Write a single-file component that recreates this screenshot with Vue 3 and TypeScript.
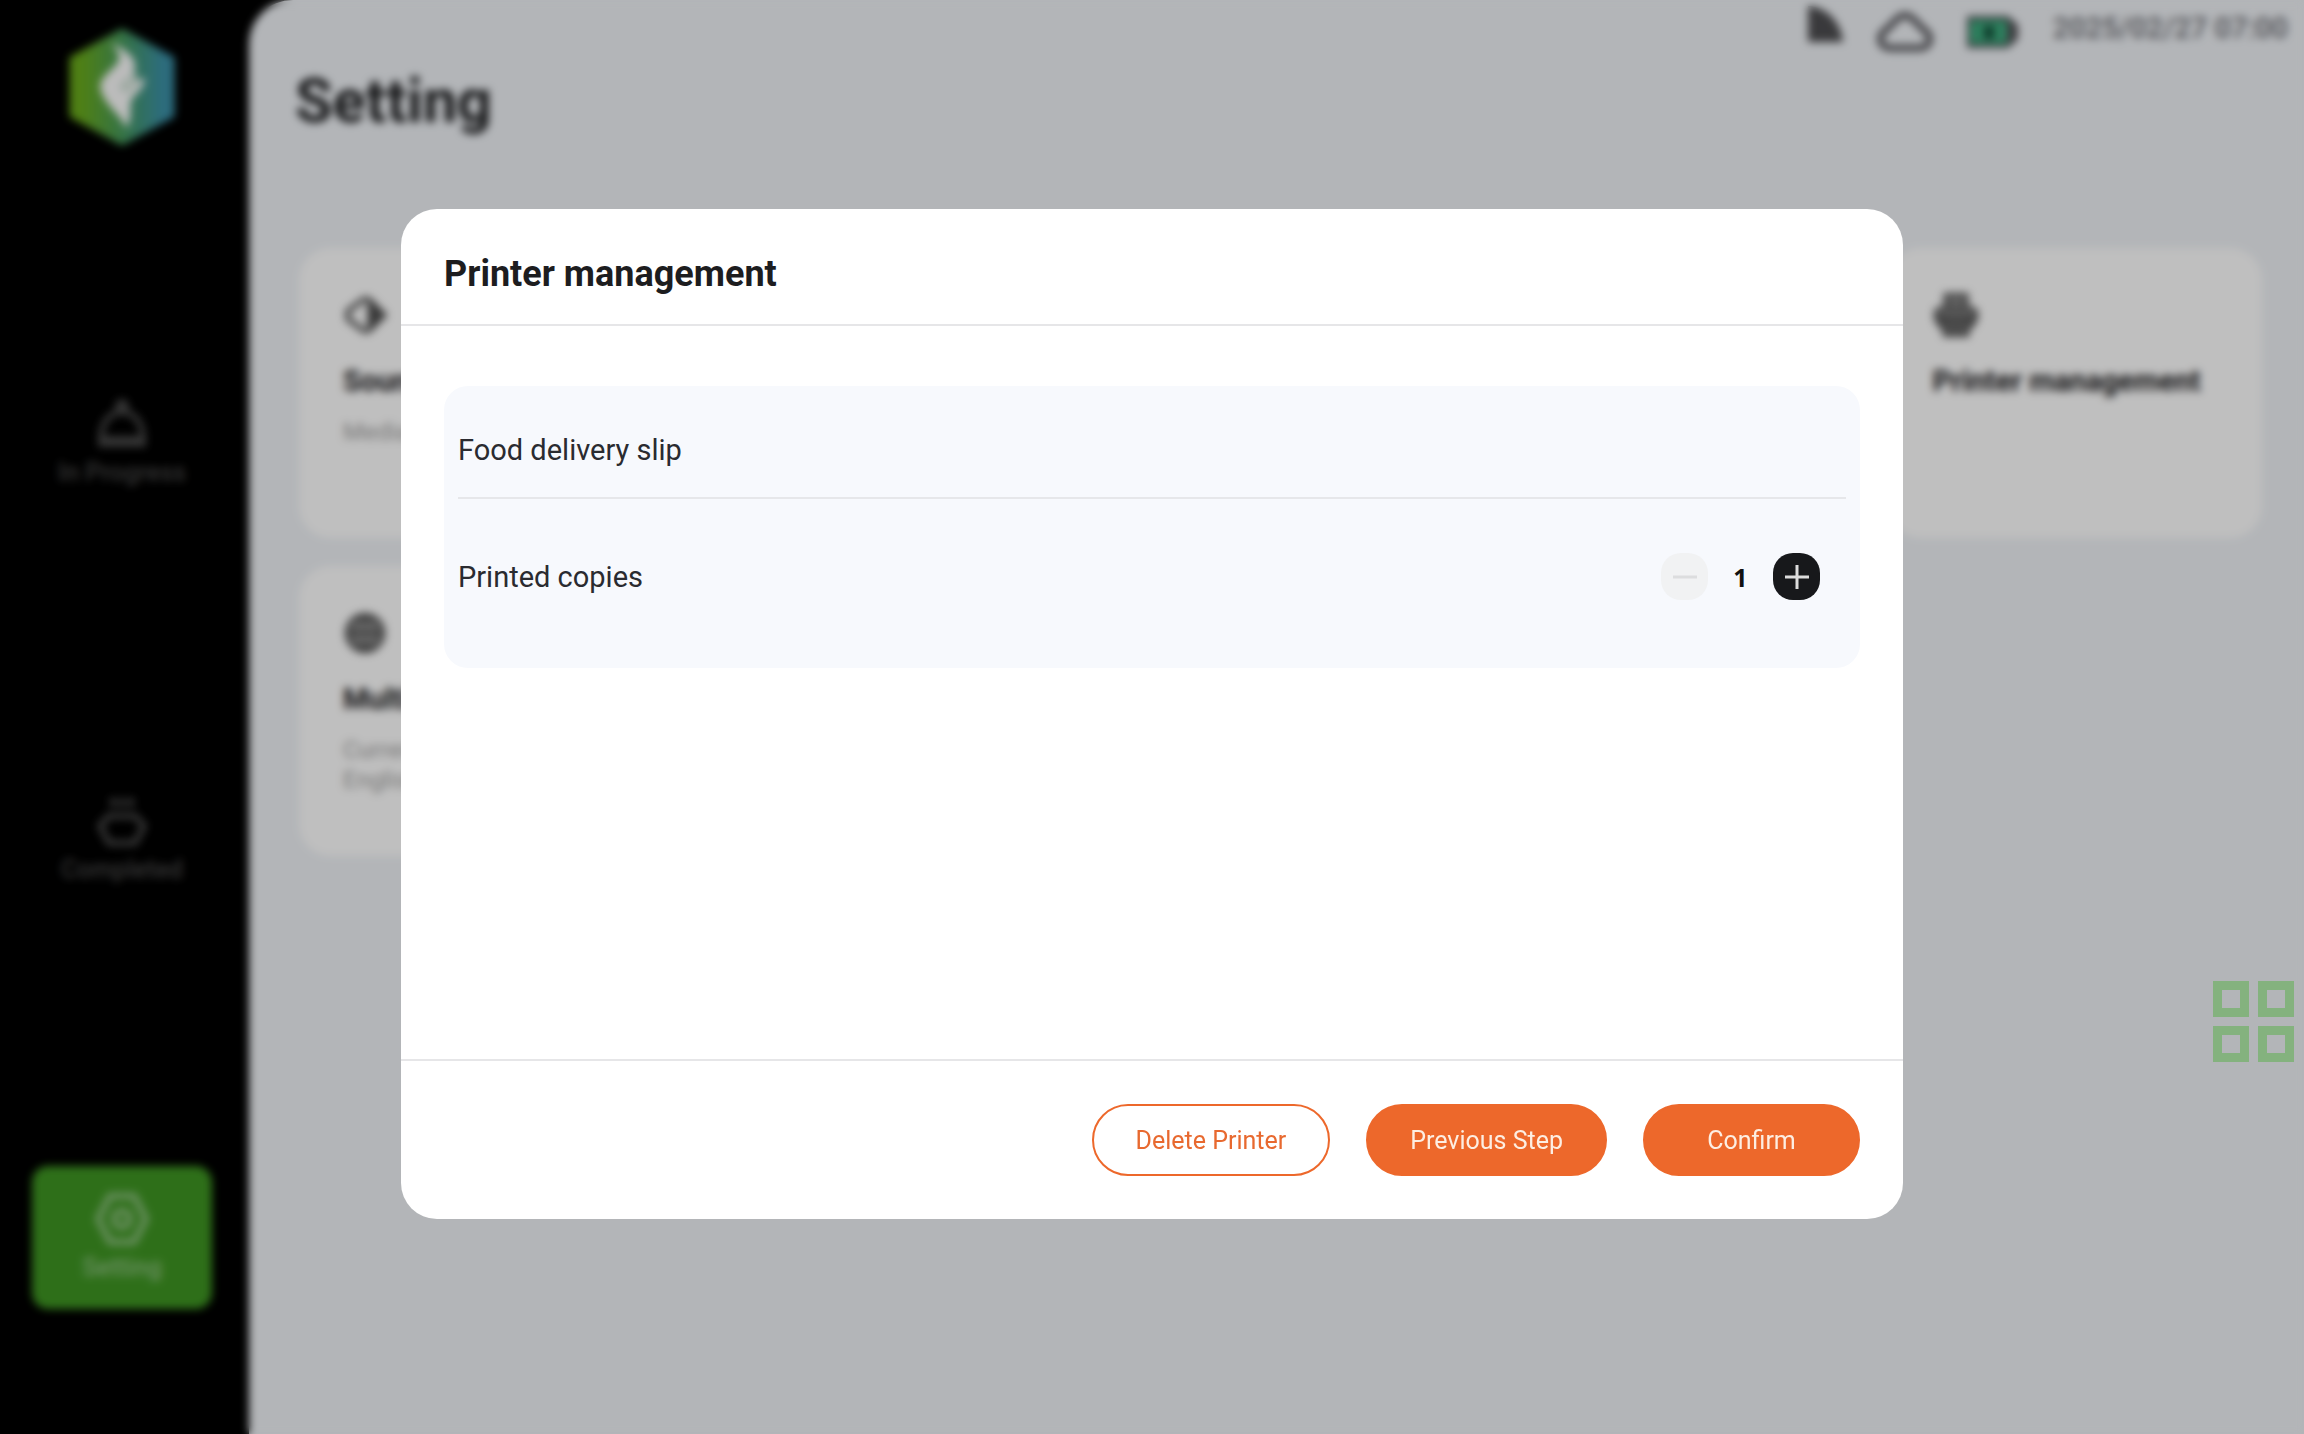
<script setup lang="ts">
import { ref } from 'vue'

interface SettingCard {
  id: string
  title: string
  lines: string[]
  place: string
}

const cards: SettingCard[] = [
  { id: 'sound', title: 'Sound', lines: ['Media'], place: 'first' },
  { id: 'printer', title: 'Printer management', lines: [], place: 'last' },
  { id: 'language', title: 'Multi', lines: ['Current', 'English'], place: 'first' },
]

const copies = ref(1)
</script>

<template>
  <div class="screen">
    <aside class="sidebar">
      <svg class="logo" viewBox="0 0 110 120" aria-hidden="true">
        <defs>
          <linearGradient id="logo-fill" x1="0" x2="1" y1="0" y2="0">
            <stop offset="0.1" stop-color="#69ab1c" />
            <stop offset="0.5" stop-color="#479a5c" />
            <stop offset="0.9" stop-color="#3c91a8" />
          </linearGradient>
        </defs>
        <path d="M55 3 106 31V89L55 117 4 89V31Z" fill="url(#logo-fill)" stroke="url(#logo-fill)" stroke-width="3" stroke-linejoin="round" />
        <path d="M45 16C57 22 70 30 68 42L64 47 70 45 67 54 78 51C77 63 65 69 64 74 62 82 66 92 59 101 55 88 35 77 33 59 34 47 55 38 52 29 51 23 47 20 45 16Z" fill="#fbfbfb" />
        <path d="M54 62Q58 52 66 51M56 64Q66 61 69 55" fill="none" stroke="#8ab79b" stroke-width="2" />
      </svg>
      <nav class="nav">
        <button class="nav-item" type="button">
          <svg class="nav-icon" viewBox="0 0 54 54" fill="none" stroke="currentColor" stroke-width="6" aria-hidden="true">
            <circle cx="27" cy="9" r="4" />
            <path d="M6 42C6 26 15 15 27 15S48 26 48 42ZM3 47H51" />
          </svg>
          <span>In Progress</span>
        </button>
        <button class="nav-item" type="button">
          <svg class="nav-icon" viewBox="0 0 54 54" fill="none" stroke="currentColor" stroke-width="6" aria-hidden="true">
            <path d="M18 4V13M27 4V13M36 4V13M14 22H40L49 32 40 49H14L5 32Z" />
          </svg>
          <span>Completed</span>
        </button>
        <button class="nav-item active" type="button">
          <svg class="nav-icon" viewBox="0 0 54 54" fill="none" stroke="currentColor" stroke-width="6" aria-hidden="true">
            <path d="M15 4H39L51 27 39 50H15L3 27Z" />
            <circle cx="27" cy="27" r="8" />
          </svg>
          <span>Setting</span>
        </button>
      </nav>
    </aside>

    <main class="main">
      <div class="status">
        <svg class="signal" viewBox="0 0 36 36" aria-hidden="true">
          <path d="M1 0C20 1 34 16 36 36H1Z" fill="#4d4d50" />
        </svg>
        <svg class="cloud" viewBox="0 0 56 40" fill="none" stroke="#5d5d62" stroke-width="7" aria-hidden="true">
          <path d="M14 36C2 36 0 24 9 18L19 8C24 2 32 2 37 8L47 18C56 24 54 36 42 36Z" />
        </svg>
        <svg class="battery" viewBox="0 0 54 34" aria-hidden="true">
          <path d="M2 1H43L53 10V24L43 33H2Z" fill="#505055" />
          <rect x="5" y="5" width="37" height="24" fill="#3dad7f" />
          <path d="M19 11H29V24H19Z" fill="#124a36" />
        </svg>
        <time>2025/02/27 07:00</time>
      </div>
      <h1>Setting</h1>
      <div class="cards">
        <section v-for="card in cards" :key="card.id" class="card" :class="card.place">
          <svg v-if="card.id === 'sound'" class="card-icon" viewBox="0 0 48 48" fill="none" stroke="#4c4c4c" stroke-width="5" aria-hidden="true">
            <path d="M24 6 5 20V28L24 42" />
            <path d="M25 6 43 24 25 42" />
            <path d="M28 14 38 24 28 34Z" fill="#4c4c4c" />
          </svg>
          <svg v-else-if="card.id === 'language'" class="card-icon" viewBox="0 0 48 48" fill="none" stroke="#4c4c4c" stroke-width="4" aria-hidden="true">
            <circle cx="23" cy="24" r="19" fill="#8a8a8a" />
            <path d="M4 24H42M15 10H31M15 38H31" />
          </svg>
          <svg v-else class="card-icon" viewBox="0 0 48 48" fill="none" stroke="#4c4c4c" stroke-width="4" aria-hidden="true">
            <path d="M13 16V3H35V16M12 36H8L3 28V20L8 17H40L45 20V28L40 36H36" fill="#8a8a8a" />
            <path d="M12 28H36V45H12Z" fill="#777" />
            <path d="M4 27H44M18 36H30" />
          </svg>
          <h2>{{ card.title }}</h2>
          <p v-for="line in card.lines" :key="line">{{ line }}</p>
        </section>
      </div>
    </main>

    <div class="overlay">
      <div class="dialog" role="dialog" aria-modal="true" aria-labelledby="dialog-title">
        <header class="dialog-head">
          <h2 id="dialog-title">Printer management</h2>
        </header>
        <div class="dialog-body">
          <div class="panel">
            <div class="row name-row">Food delivery slip</div>
            <div class="row copies-row">
              <span id="copies-label">Printed copies</span>
              <div class="stepper" role="group" aria-labelledby="copies-label">
                <button class="step minus" type="button" aria-label="Fewer copies" :disabled="copies <= 1" @click="copies--">
                  <svg viewBox="0 0 24 24" stroke="currentColor" stroke-width="3" aria-hidden="true"><path d="M0 12H24" /></svg>
                </button>
                <output class="count">{{ copies }}</output>
                <button class="step plus" type="button" aria-label="More copies" @click="copies++">
                  <svg viewBox="0 0 24 24" stroke="currentColor" stroke-width="3" aria-hidden="true"><path d="M0 12H24M12 0V24" /></svg>
                </button>
              </div>
            </div>
          </div>
        </div>
        <footer class="dialog-foot">
          <button class="action outline" type="button">Delete Printer</button>
          <button class="action" type="button">Previous Step</button>
          <button class="action" type="button">Confirm</button>
        </footer>
      </div>
    </div>

    <button class="float" type="button" aria-label="Shortcuts">
      <span v-for="n in 4" :key="n" class="tile"></span>
    </button>
  </div>
</template>

<style>
body {
  margin: 0;
  background: #000;
}
</style>

<style scoped>
.screen {
  position: relative;
  display: flex;
  min-height: 100vh;
  overflow: hidden;
  background: #000;
  font-family: Roboto, "Liberation Sans", sans-serif;
  color: #1d1d1f;
}

button {
  font: inherit;
  border: 0;
  padding: 0;
  cursor: pointer;
}

h1,
h2,
p {
  margin: 0;
}

.sidebar {
  display: flex;
  flex-direction: column;
  align-items: center;
  box-sizing: border-box;
  flex: 0 0 249px;
  padding: 27px 5px 125px 0;
}

.logo {
  width: 110px;
  height: 120px;
}

.nav {
  flex: 1;
  display: flex;
  flex-direction: column;
  justify-content: space-between;
  margin-top: 224px;
}

.nav-item {
  display: flex;
  flex-direction: column;
  align-items: center;
  justify-content: center;
  gap: 6px;
  width: 180px;
  height: 143px;
  border-radius: 16px;
  background: none;
  color: #484848;
  font-size: 25px;
  font-weight: 500;
  line-height: 32px;
}

.nav-item.active {
  background: #3e9522;
  color: #8fc183;
}

.nav-icon {
  width: 54px;
  height: 54px;
}

.main {
  flex: 1;
  box-sizing: border-box;
  padding: 8px 38px 40px 46px;
  border-top-left-radius: 44px;
  background: #eff2f6;
}

.status {
  display: flex;
  justify-content: flex-end;
  align-items: center;
  height: 40px;
  margin-right: -22px;
}

.signal {
  width: 36px;
  height: 36px;
  margin: 0 34px 8px 0;
}

.cloud {
  width: 56px;
  height: 40px;
  margin: 8px 32px 0 0;
}

.battery {
  width: 54px;
  height: 34px;
  margin: 8px 34px 0 0;
}

time {
  font-size: 29px;
  font-weight: 500;
  line-height: 38px;
  color: #696a70;
}

h1 {
  margin-top: 15px;
  font-size: 61px;
  line-height: 76px;
  color: #1f2022;
}

.cards {
  display: grid;
  grid-template-columns: repeat(5, 1fr);
  gap: 28px 24px;
  margin-top: 109px;
  padding: 0 4px;
}

.card {
  box-sizing: border-box;
  min-height: 290px;
  padding: 44px;
  border-radius: 32px;
  background: #fff;
}

.first {
  grid-column: 1;
}

.last {
  grid-column: 5;
}

.card-icon {
  display: block;
  width: 46px;
  height: 46px;
}

.card h2 {
  margin: 25px 0 18px;
  font-size: 29px;
  line-height: 36px;
  white-space: nowrap;
}

.card p {
  font-size: 24px;
  line-height: 30px;
  color: #a0a0a0;
}

.overlay {
  position: absolute;
  inset: 0;
  display: flex;
  padding: 209px 401px 215px;
  background: rgba(0, 0, 0, 0.25);
  backdrop-filter: blur(4px);
}

.dialog {
  flex: 1;
  display: flex;
  flex-direction: column;
  border-radius: 36px;
  background: #fff;
}

.dialog-head {
  padding: 42px 43px 27px;
  border-bottom: 2px solid #e6e6e8;
}

.dialog-head h2 {
  font-size: 36px;
  line-height: 46px;
}

.dialog-body {
  flex: 1;
  padding: 60px 43px;
}

.panel {
  box-sizing: border-box;
  min-height: 282px;
  padding: 0 14px;
  border-radius: 24px;
  background: #f7f9fd;
  font-size: 29px;
  line-height: 36px;
}

.row {
  color: #2a2b30;
}

.name-row {
  padding: 46px 0 29px;
  border-bottom: 2px solid #e6e7ea;
}

.copies-row {
  display: flex;
  align-items: center;
  justify-content: space-between;
  padding: 54px 26px 0 0;
}

.stepper {
  display: flex;
  align-items: center;
}

.step {
  display: flex;
  align-items: center;
  justify-content: center;
  width: 47px;
  height: 47px;
  border-radius: 20px;
}

.step svg {
  width: 24px;
  height: 24px;
}

.minus {
  background: #f1f2f3;
  color: #dcddde;
}

.plus {
  background: #17181b;
  color: #dcdcdc;
}

.count {
  width: 65px;
  text-align: center;
  font-family: "Noto Sans", sans-serif;
  font-size: 25px;
  font-weight: 700;
  color: #111;
}

.dialog-foot {
  display: flex;
  justify-content: flex-end;
  gap: 36px;
  padding: 43px 43px;
  border-top: 2px solid #e6e6e8;
}

.action {
  box-sizing: border-box;
  min-width: 217px;
  height: 72px;
  padding: 0 42px;
  border: 2px solid #ed682b;
  border-radius: 36px;
  background: #ed682b;
  color: #fdeee2;
  font-size: 25px;
}

.outline {
  background: #fff;
  color: #e8692f;
}

.float {
  position: absolute;
  right: 10px;
  bottom: 372px;
  display: grid;
  grid-template-columns: 36px 36px;
  gap: 9px;
  background: none;
}

.tile {
  box-sizing: border-box;
  height: 36px;
  border: 9px solid #84b27e;
}
</style>
